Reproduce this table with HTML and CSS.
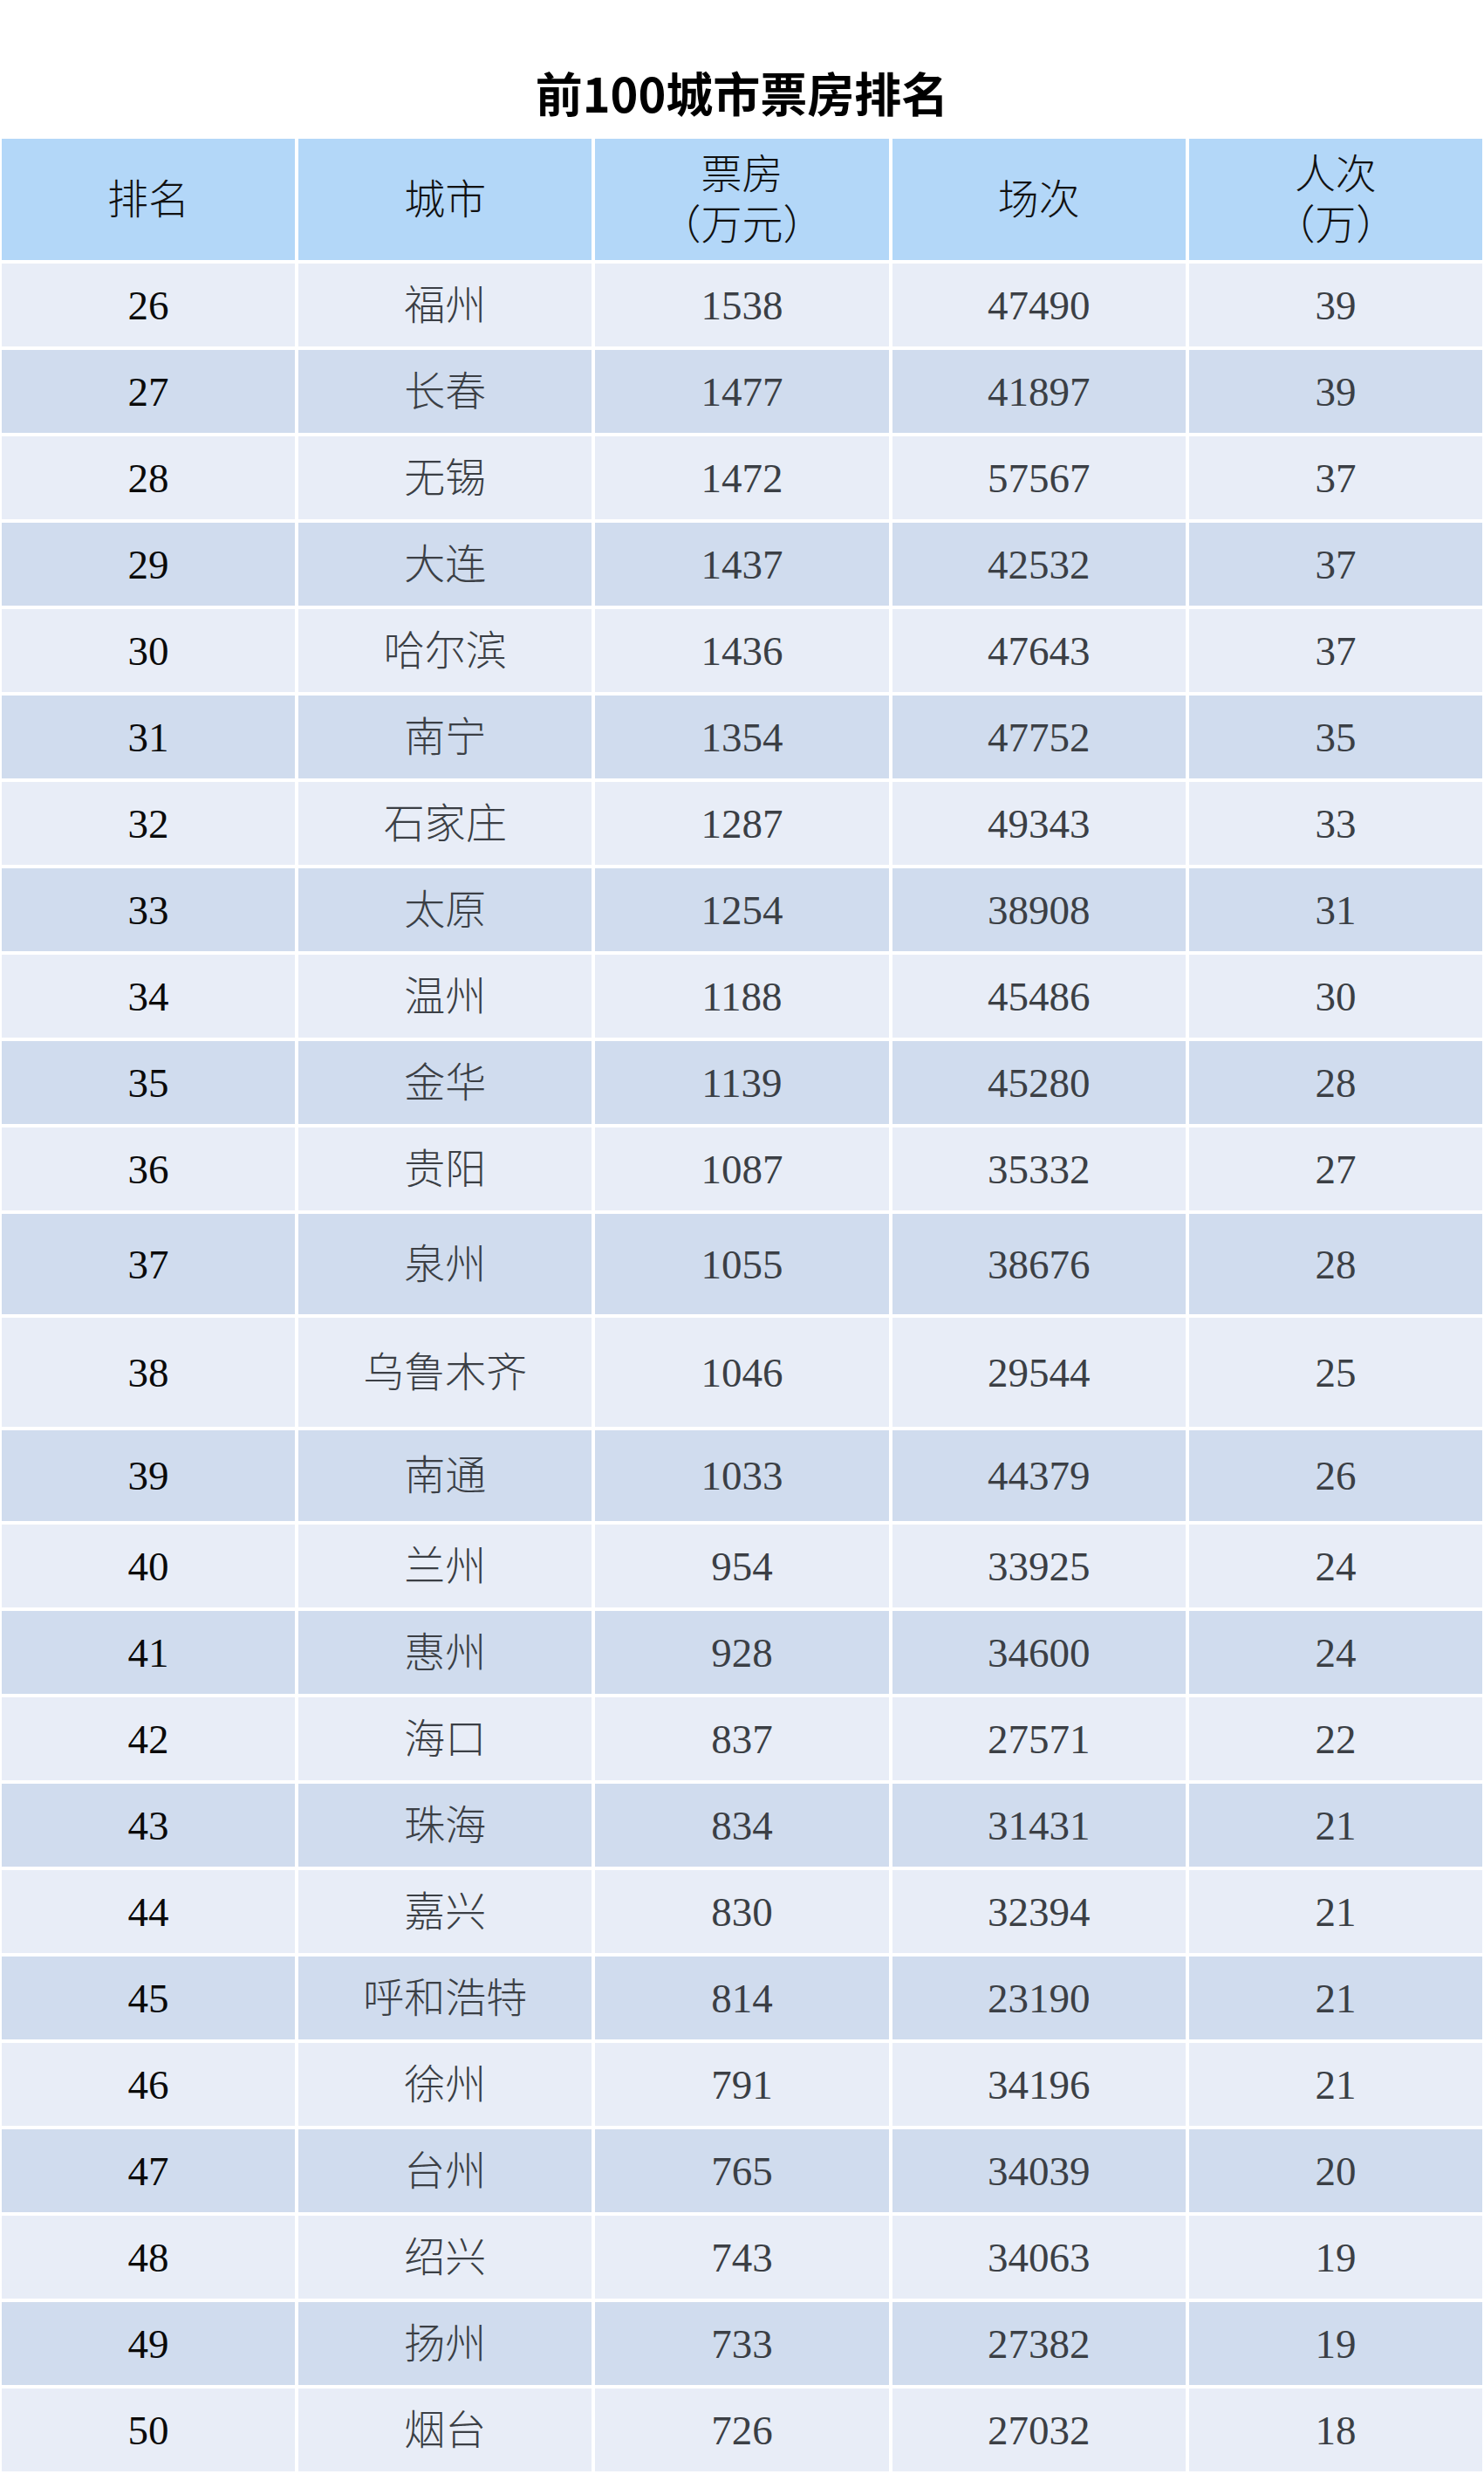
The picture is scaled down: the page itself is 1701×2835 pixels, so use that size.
FILE: index.html
```html
<!DOCTYPE html>
<html lang="zh-CN">
<head>
<meta charset="utf-8">
<title>前100城市票房排名</title>
<link rel="stylesheet" href="styles.css">
</head>
<body>
<h1 class="title">前100城市票房排名</h1>
<table class="rank-table">
  <thead>
    <tr class="head-row">
      <th>排名</th>
      <th>城市</th>
      <th>票房<br>（万元）</th>
      <th>场次</th>
      <th>人次<br>（万）</th>
    </tr>
  </thead>
  <tbody>
    <tr class="odd"><td class="rank">26</td><td>福州</td><td>1538</td><td>47490</td><td>39</td></tr>
    <tr class="even"><td class="rank">27</td><td>长春</td><td>1477</td><td>41897</td><td>39</td></tr>
    <tr class="odd"><td class="rank">28</td><td>无锡</td><td>1472</td><td>57567</td><td>37</td></tr>
    <tr class="even"><td class="rank">29</td><td>大连</td><td>1437</td><td>42532</td><td>37</td></tr>
    <tr class="odd"><td class="rank">30</td><td>哈尔滨</td><td>1436</td><td>47643</td><td>37</td></tr>
    <tr class="even"><td class="rank">31</td><td>南宁</td><td>1354</td><td>47752</td><td>35</td></tr>
    <tr class="odd"><td class="rank">32</td><td>石家庄</td><td>1287</td><td>49343</td><td>33</td></tr>
    <tr class="even"><td class="rank">33</td><td>太原</td><td>1254</td><td>38908</td><td>31</td></tr>
    <tr class="odd"><td class="rank">34</td><td>温州</td><td>1188</td><td>45486</td><td>30</td></tr>
    <tr class="even"><td class="rank">35</td><td>金华</td><td>1139</td><td>45280</td><td>28</td></tr>
    <tr class="odd"><td class="rank">36</td><td>贵阳</td><td>1087</td><td>35332</td><td>27</td></tr>
    <tr class="even tall-a"><td class="rank">37</td><td>泉州</td><td>1055</td><td>38676</td><td>28</td></tr>
    <tr class="odd tall-b"><td class="rank">38</td><td>乌鲁木齐</td><td>1046</td><td>29544</td><td>25</td></tr>
    <tr class="even tall-c"><td class="rank">39</td><td>南通</td><td>1033</td><td>44379</td><td>26</td></tr>
    <tr class="odd"><td class="rank">40</td><td>兰州</td><td>954</td><td>33925</td><td>24</td></tr>
    <tr class="even"><td class="rank">41</td><td>惠州</td><td>928</td><td>34600</td><td>24</td></tr>
    <tr class="odd"><td class="rank">42</td><td>海口</td><td>837</td><td>27571</td><td>22</td></tr>
    <tr class="even"><td class="rank">43</td><td>珠海</td><td>834</td><td>31431</td><td>21</td></tr>
    <tr class="odd"><td class="rank">44</td><td>嘉兴</td><td>830</td><td>32394</td><td>21</td></tr>
    <tr class="even"><td class="rank">45</td><td>呼和浩特</td><td>814</td><td>23190</td><td>21</td></tr>
    <tr class="odd"><td class="rank">46</td><td>徐州</td><td>791</td><td>34196</td><td>21</td></tr>
    <tr class="even"><td class="rank">47</td><td>台州</td><td>765</td><td>34039</td><td>20</td></tr>
    <tr class="odd"><td class="rank">48</td><td>绍兴</td><td>743</td><td>34063</td><td>19</td></tr>
    <tr class="even"><td class="rank">49</td><td>扬州</td><td>733</td><td>27382</td><td>19</td></tr>
    <tr class="odd"><td class="rank">50</td><td>烟台</td><td>726</td><td>27032</td><td>18</td></tr>
  </tbody>
</table>
</body>
</html>
```
FILE: styles.css
```css
html, body {
  margin: 0;
  padding: 0;
  background: #ffffff;
}

body {
  width: 1701px;
  overflow: hidden;
}

.title {
  box-sizing: border-box;
  height: 157px;
  margin: 0;
  padding-top: 76px;
  font-family: "Noto Sans CJK SC", "Noto Sans", sans-serif;
  font-weight: 700;
  font-size: 54px;
  line-height: 60px;
  text-align: center;
  color: #000000;
}

.rank-table {
  width: 1701px;
  table-layout: fixed;
  border-collapse: separate;
  border-spacing: 0;
  font-family: "Liberation Serif", "Noto Sans CJK SC", serif;
  font-size: 47px;
  font-weight: 300;
  text-align: center;
}

.rank-table th,
.rank-table td {
  border: 2px solid #ffffff;
  padding: 0;
  vertical-align: middle;
  text-align: center;
}

.rank-table th {
  background: #b3d7f8;
  color: #111111;
  font-weight: 300;
  line-height: 58px;
}

.head-row {
  height: 143px;
}

.rank-table td {
  color: #3b3f45;
  line-height: 56px;
}

.rank-table td.rank {
  color: #0a0a0a;
}

.rank-table tbody tr {
  height: 99px;
}

.rank-table tr.odd td {
  background: #e8edf7;
}

.rank-table tr.even td {
  background: #d0dcee;
}

.rank-table tr.tall-a {
  height: 119px;
}

.rank-table tr.tall-b {
  height: 129px;
}

.rank-table tr.tall-c {
  height: 108px;
}
```
